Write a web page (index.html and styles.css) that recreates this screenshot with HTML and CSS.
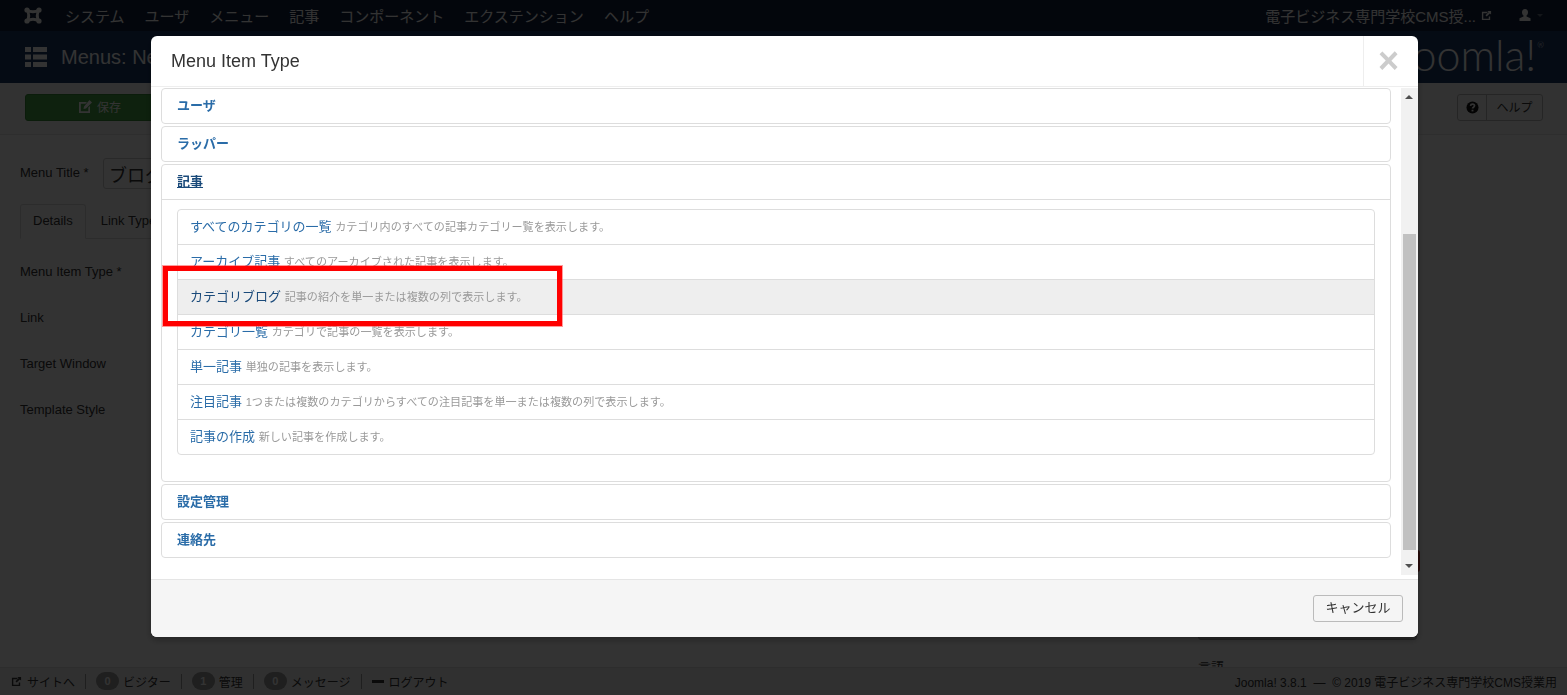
FILE: index.html
```html
<!DOCTYPE html>
<html lang="ja">
<head>
<meta charset="utf-8">
<title>Menus: New Item</title>
<link rel="stylesheet" href="styles.css">
</head>
<body>
<div class="page">
  <nav class="topnav">
    <svg class="jlogo" viewBox="0 0 18 17" width="18" height="17"><path fill="none" stroke="currentColor" stroke-width="2.800" d="M3 3Q9 6.500 15 3 11.500 8.500 15 14 9 10.500 3 14 6.500 8.500 3 3Z"/><g fill="currentColor"><circle cx="3" cy="3" r="2.600"/><circle cx="15" cy="3" r="2.600"/><circle cx="3" cy="14" r="2.600"/><circle cx="15" cy="14" r="2.600"/></g></svg>
    <ul class="topmenu">
      <li>システム</li><li>ユーザ</li><li>メニュー</li><li>記事</li><li>コンポーネント</li><li>エクステンション</li><li>ヘルプ</li>
    </ul>
    <div class="topright">
      <span>電子ビジネス専門学校CMS授...</span>
      <svg class="ic" viewBox="0 0 12 12" width="11" height="11"><path fill="currentColor" d="M1 2h6v1.500H2.500v6h6V7H10v4H1zM7 1h4v4L9.600 3.700 6.200 7.100 4.900 5.800 8.300 2.400z"/></svg>
      <svg class="usr" viewBox="0 0 14 14" width="14" height="14"><path fill="currentColor" d="M7 1c2 0 3 1.500 3 3.300 0 1.400-.6 2.600-1.500 3.300v1l4 1.700V13H1.500v-2.700l4-1.700v-1C4.600 6.900 4 5.700 4 4.300 4 2.500 5 1 7 1z"/></svg>
      <i class="caret"></i>
    </div>
  </nav>
  <header class="band">
    <svg class="listic" viewBox="0 0 22 20" width="22" height="20"><path fill="currentColor" d="M0 0h6v5H0zM8 0h14v5H8zM0 7.500h6v5H0zM8 7.500h14v5H8zM0 15h6v5H0zM8 15h14v5H8z"/></svg>
    <h1>Menus: New Item</h1>
    <div class="brand">Joomla!<sup>®</sup></div>
  </header>
  <div class="toolbar">
    <button class="btn-save"><svg viewBox="0 0 13 13" width="13" height="13"><path fill="currentColor" d="M0 2h8L6.500 3.700H1.800v7.500h7.500V7.500L11 6v7H0zM10.500 0 13 2.500 7 8.500 4.500 9l.5-2.500z"/></svg><span>保存</span></button>
    <div class="help">
      <span class="help-q"><svg viewBox="0 0 14 14" width="13" height="13"><circle cx="7" cy="7" r="6.500" fill="currentColor"/><path fill="none" stroke="#fff" stroke-width="1.800" d="M4.800 5.300C5 3.900 6 3.400 7 3.400c1.300 0 2.200.8 2.200 1.800 0 1.500-2.200 1.500-2.200 3"/><rect x="6" y="9.400" width="2" height="1.800" fill="#fff"/></svg></span>
      <span class="help-t">ヘルプ</span>
    </div>
  </div>
  <main class="content">
    <div class="main-col">
      <div class="titlerow">
        <label class="lbl-title">Menu Title *</label>
        <div class="title-input">ブログ</div>
      </div>
      <div class="tabs">
        <span class="tab active">Details</span>
        <span class="tab">Link Type</span>
      </div>
      <div class="fields">
        <div>Menu Item Type *</div>
        <div>Link</div>
        <div>Target Window</div>
        <div>Template Style</div>
      </div>
    </div>
    <aside class="side-col">
      <div class="side-btn"></div>
      <div class="side-input"></div>
      <div class="side-label">言語</div>
    </aside>
  </main>
  <footer class="status">
    <div class="st-left">
      <span class="st-item"><svg class="st-ic" viewBox="0 0 12 12" width="11" height="11"><path fill="currentColor" d="M1 2h6v1.500H2.500v6h6V7H10v4H1zM7 1h4v4L9.600 3.700 6.200 7.100 4.900 5.800 8.300 2.400z"/></svg>サイトへ</span>
      <span class="st-item"><b class="badge">0</b>ビジター</span>
      <span class="st-item"><b class="badge">1</b>管理</span>
      <span class="st-item"><b class="badge">0</b>メッセージ</span>
      <span class="st-item last"><i class="minus"></i>ログアウト</span>
    </div>
    <div class="st-right">Joomla! 3.8.1 &nbsp;—&nbsp; © 2019 電子ビジネス専門学校CMS授業用</div>
  </footer>
</div>
<div class="backdrop"></div>
<section class="modal">
  <div class="m-head">
    <h3>Menu Item Type</h3>
    <div class="m-close">×</div>
  </div>
  <div class="m-body">
    <div class="m-scroll">
      <div class="panel"><div class="p-head"><a>ユーザ</a></div></div>
      <div class="panel"><div class="p-head"><a>ラッパー</a></div></div>
      <div class="panel">
        <div class="p-head open"><a class="focus">記事</a></div>
        <div class="p-body">
          <ul class="items">
            <li><a>すべてのカテゴリの一覧</a> <small>カテゴリ内のすべての記事カテゴリー覧を表示します。</small></li>
            <li><a>アーカイブ記事</a> <small>すべてのアーカイブされた記事を表示します。</small></li>
            <li class="hover"><a>カテゴリブログ</a> <small>記事の紹介を単一または複数の列で表示します。</small></li>
            <li><a>カテゴリ一覧</a> <small>カテゴリで記事の一覧を表示します。</small></li>
            <li><a>単一記事</a> <small>単独の記事を表示します。</small></li>
            <li><a>注目記事</a> <small>1つまたは複数のカテゴリからすべての注目記事を単一または複数の列で表示します。</small></li>
            <li><a>記事の作成</a> <small>新しい記事を作成します。</small></li>
          </ul>
        </div>
      </div>
      <div class="panel"><div class="p-head"><a>設定管理</a></div></div>
      <div class="panel"><div class="p-head"><a>連絡先</a></div></div>
    </div>
    <div class="sbar">
      <span class="arr up"></span>
      <span class="thumb"></span>
      <span class="arr down"></span>
    </div>
  </div>
  <div class="m-foot"><button class="cancel">キャンセル</button></div>
  <div class="callout"></div>
</section>
</body>
</html>
```
FILE: styles.css
```css
* { box-sizing: border-box; }
html, body { margin: 0; height: 100%; overflow: hidden; }
body { font-family: "Liberation Sans", "Noto Sans CJK JP", sans-serif; font-size: 13px; color: #333; background: #fff; }
ul { list-style: none; margin: 0; padding: 0; }
h1, h3 { margin: 0; font-weight: 400; }
.page { height: 695px; display: flex; flex-direction: column; background: #fff; }

.topnav { height: 31px; background: #13213c; color: #fff; display: flex; align-items: center; padding: 0 0 1px 24px; flex: none; }
.jlogo { margin-right: 23px; }
.topmenu { display: flex; gap: 20px; font-size: 15px; }
.topright { margin-left: auto; display: flex; align-items: center; font-size: 15px; padding-right: 24px; }
.ic { margin-left: 5px; }
.usr { margin-left: 26px; }
.caret { width: 0; height: 0; margin-left: 5px; border-left: 3px solid transparent; border-right: 3px solid transparent; border-top: 3px solid rgba(255, 255, 255, .35); }

.band { height: 52px; background: #1a3867; color: #fff; display: flex; align-items: center; padding: 0 23px 0 25px; flex: none; }
.band h1 { font-size: 20px; margin-left: 14px; }
.brand { margin-left: auto; font-family: Lato, "Liberation Sans", sans-serif; font-size: 43px; font-weight: 300; line-height: 1; padding-bottom: 5px; white-space: nowrap; }
.brand sup { font-size: 8px; vertical-align: top; line-height: 1; display: inline-block; margin: 8px 0 0 1px; }

.toolbar { height: 52px; background: #fafafa; border-bottom: 1px solid #e6e6e6; display: flex; align-items: center; justify-content: space-between; padding: 0 24px 2px 25px; flex: none; }
.btn-save { width: 155px; height: 27px; background: #46a546; color: #fff; border: 1px solid #3a8a3a; border-radius: 3px; font: 12px "Liberation Sans", "Noto Sans CJK JP", sans-serif; display: flex; align-items: center; justify-content: center; gap: 5px; padding: 0 5px 2px 0; }
.help { display: flex; height: 27px; border: 1px solid #bbb; border-radius: 3px; align-items: center; }
.help-q { width: 29px; height: 100%; display: flex; align-items: center; justify-content: center; border-right: 1px solid #bbb; color: #111; }
.help-t { width: 55px; text-align: center; font-size: 12px; padding: 0 0 2px; }

.content { flex: 1; min-height: 0; overflow: hidden; display: flex; padding: 23px 20px 0; }
.main-col { width: 1178px; flex: none; }
.titlerow { display: flex; align-items: center; height: 31px; }
.lbl-title { width: 83px; padding-bottom: 2px; }
.title-input { width: 400px; height: 31px; border: 1px solid #ccc; border-radius: 3px; font-size: 18px; padding: 2px 5px; }
.tabs { margin-top: 15px; display: flex; gap: 3px; height: 35px; border-bottom: 1px solid #ddd; }
.tab { padding: 9px 12px 0; }
.tab.active { border: 1px solid #ddd; border-bottom-color: #fff; border-radius: 3px 3px 0 0; height: 35px; padding-top: 8px; padding-left: 12px; padding-right: 12px; }
.fields { padding-top: 18px; display: flex; flex-direction: column; }
.fields div { height: 46px; line-height: 30px; }
.side-col { flex: 1; padding-top: 392px; }
.side-btn { width: 222px; height: 22px; background: #bd362f; border-radius: 0 3px 3px 0; }
.side-input { width: 219px; height: 22px; margin-top: 46px; border: 1px solid #aaa; border-radius: 3px; background: #c8c8c8; }
.side-label { margin-top: 17px; }

.status { height: 28px; background: #f0f0f0; border-top: 1px solid #e0e0e0; flex: none; display: flex; align-items: center; justify-content: space-between; padding: 0 10px 0 11px; font-size: 12px; color: #333; }
.st-left { display: flex; align-items: center; padding-bottom: 1px; }
.st-item { display: flex; align-items: center; padding-right: 10px; margin-right: 10px; border-right: 1px solid #999; height: 15px; gap: 4px; }
.st-item.last { border: 0; }
.st-ic { margin-right: 1px; }
.badge { width: 23px; height: 18px; border-radius: 9px; background: #999; color: #fff; font-size: 11px; display: flex; align-items: center; justify-content: center; }
.minus { width: 12px; height: 3px; background: #333; display: block; margin-right: 1px; }
.st-right { font-size: 12px; }

.backdrop { position: fixed; inset: 0; background: rgba(0, 0, 0, .8); }
.modal { position: fixed; left: 151px; top: 36px; width: 1267px; height: 601px; background: #fff; border-radius: 6px; display: flex; flex-direction: column; box-shadow: 0 3px 7px rgba(0, 0, 0, .3); overflow: hidden; }
.m-head { height: 51px; flex: none; display: flex; align-items: stretch; justify-content: space-between; border-bottom: 1px solid #eee; }
.m-head h3 { font-size: 18px; line-height: 50px; padding-left: 20px; color: #333; }
.m-close { width: 55px; border-left: 1px solid #eee; color: #ccc; font-size: 36px; font-weight: 700; text-align: center; line-height: 49px; padding-right: 5px; }
.m-body { height: 493px; flex: none; display: flex; align-items: flex-start; border-bottom: 1px solid #e5e5e5; padding-left: 10px; }
.m-scroll { width: 1230px; padding-top: 1px; display: flex; flex-direction: column; gap: 2px; }
.panel { border: 1px solid #ddd; border-radius: 4px; background: #fff; }
.p-head { height: 34px; line-height: 33px; padding-left: 15px; font-weight: 700; font-size: 13px; color: #2a6ca8; }
.p-head.open { height: 35px; border-bottom: 1px solid #ddd; line-height: 33px; }
.p-head .focus { color: #1a4a7a; text-decoration: underline; }
.p-body { padding: 9px 15px 26px; height: 281px; }
.items { border: 1px solid #ddd; border-radius: 4px; }
.items li { height: 35px; line-height: 33px; padding-left: 12px; border-bottom: 1px solid #ddd; font-size: 13px; color: #2a6ca8; white-space: nowrap; }
.items li:last-child { border-bottom: 0; height: 34px; }
.items li.hover { background: #eee; color: #1a4a7a; }
.items small { font-size: 11.1px; color: #999; }
.sbar { width: 17px; height: 487px; margin: 1px 0 0 10px; background: #f1f1f1; position: relative; }
.arr { width: 0; height: 0; border-left: 4px solid transparent; border-right: 4px solid transparent; position: absolute; left: 4px; }
.arr.up { top: 7px; border-bottom: 4px solid #505050; }
.arr.down { bottom: 7px; border-top: 4px solid #505050; }
.thumb { position: absolute; left: 2px; top: 146px; height: 316px; width: 13px; background: #c1c1c1; }
.m-foot { flex: 1; background: #f5f5f5; display: flex; align-items: center; justify-content: flex-end; padding: 0 15px 1px 0; }
.cancel { width: 90px; height: 27px; background: #f5f5f5; border: 1px solid #bbb; border-radius: 3px; color: #333; font: 13px "Liberation Sans", "Noto Sans CJK JP", sans-serif; padding: 0 0 4px; }
.callout { position: absolute; left: 12px; top: 230px; width: 399px; height: 60px; border: 5px solid #f00; box-shadow: 0 0 0 1px rgba(255, 90, 90, .6); }
```
